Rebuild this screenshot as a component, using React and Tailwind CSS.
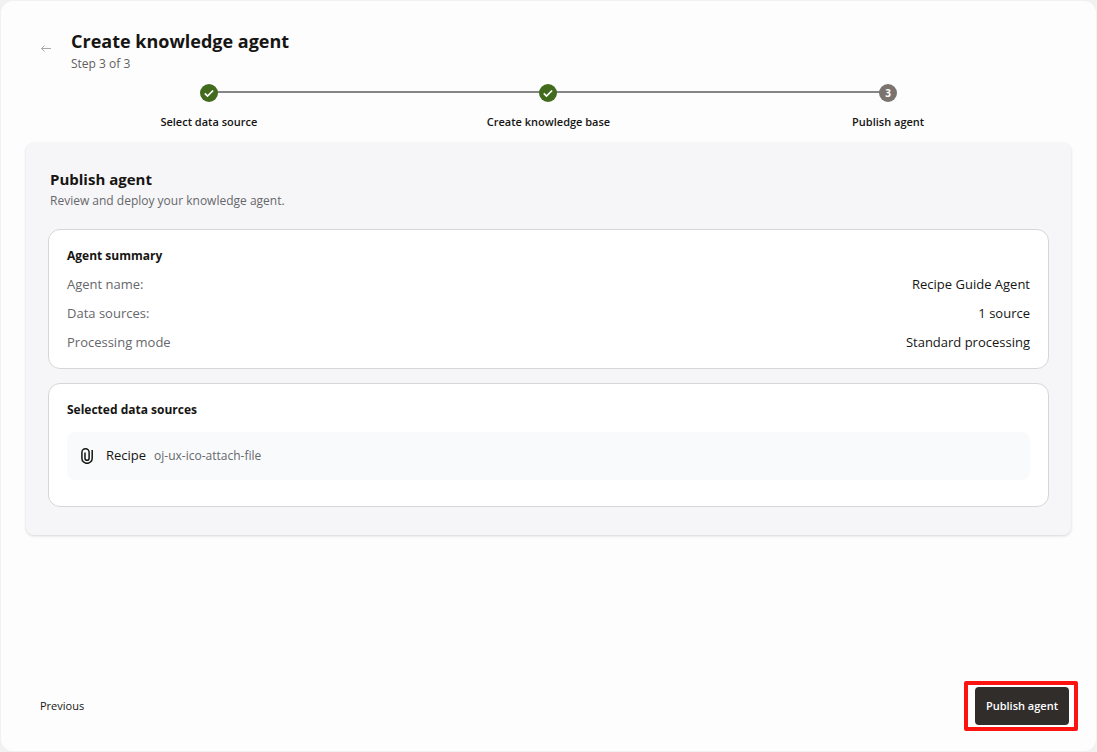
import React from "react";

const steps = [
  { label: "Select data source", done: true },
  { label: "Create knowledge base", done: true },
  { label: "Publish agent", done: false },
];

const summary = [
  { name: "Agent name:", value: "Recipe Guide Agent" },
  { name: "Data sources:", value: "1 source" },
  { name: "Processing mode", value: "Standard processing" },
];

function BackIcon() {
  return (
    <svg width="12" height="12" viewBox="0 0 12 12" fill="none" stroke="currentColor" aria-hidden="true">
      <path d="M11 6.5H1.5M4.5 3.5l-3 3 3 3" />
    </svg>
  );
}

function CheckIcon() {
  return (
    <svg width="18" height="18" viewBox="0 0 18 18" fill="none" stroke="currentColor" strokeWidth="1.7" aria-hidden="true">
      <path d="M4.8 9.4l2.7 2.7 5.6-5.6" />
    </svg>
  );
}

function AttachIcon() {
  return (
    <svg width="12" height="16" viewBox="0 0 12 16" fill="none" stroke="currentColor" strokeWidth="1.5" aria-hidden="true">
      <path d="M11.2 2v8.2a5.1 5.1 0 0 1-10.3 0V4.4a3.6 3.6 0 0 1 7.2 0v5.8a2.05 2.05 0 0 1-4.1 0V4.6" />
    </svg>
  );
}

function Step({ step, number, last }) {
  return (
    <li className="relative flex flex-col items-center">
      {!last && (
        <span className="absolute top-[7px] left-1/2 h-0.5 w-full bg-[#858585]" />
      )}
      <span
        className={
          step.done
            ? "relative flex size-[18px] items-center justify-center rounded-full bg-[#436b1d] text-white"
            : "relative flex size-[18px] items-center justify-center rounded-full bg-[#7a736e] text-[10px] font-bold text-white"
        }
      >
        {step.done ? <CheckIcon /> : number}
      </span>
      <span className="mt-3 text-[11px] leading-4 font-semibold">{step.label}</span>
    </li>
  );
}

function Card({ title, children }) {
  return (
    <section className="rounded-xl border border-[#d6d6d8] bg-white px-[18px] pt-4">
      <h3 className="text-xs leading-5 font-bold">{title}</h3>
      {children}
    </section>
  );
}

export default function App() {
  return (
    <div className="flex min-h-screen bg-[#f1f1f1] p-px font-['Open_Sans',sans-serif] text-[#161513]">
      <main className="flex flex-1 flex-col rounded-xl bg-[#fdfdfd] px-[25px] pt-7 pb-5">
        <header className="flex gap-[19px] pl-[14px]">
          <button type="button" aria-label="Back" className="mt-[13px] size-3 text-[#a8a8a8]">
            <BackIcon />
          </button>
          <div>
            <h1 className="text-lg leading-6 font-bold">Create knowledge agent</h1>
            <p className="mt-px text-xs leading-5 text-[#5f5f5f]">Step 3 of 3</p>
          </div>
        </header>

        <ol className="mx-[13px] mt-[10px] grid grid-cols-3">
          {steps.map((step, i) => (
            <Step key={step.label} step={step} number={i + 1} last={i === steps.length - 1} />
          ))}
        </ol>

        <div className="mt-[13px] rounded-lg bg-[#f6f6f8] px-6 pt-6 pb-7 shadow-[0_1px_3px_rgba(0,0,0,0.16)]">
          <h2 className="text-[15px] leading-6 font-bold">Publish agent</h2>
          <p className="text-xs leading-5 text-[#66676b]">Review and deploy your knowledge agent.</p>

          <div className="-mx-0.5 mt-[18px] grid gap-[14px]">
            <Card title="Agent summary">
              <dl className="grid gap-[9px] pt-2 pb-4">
                {summary.map((row) => (
                  <div key={row.name} className="flex justify-between text-[13px] leading-5">
                    <dt className="text-[#66676b]">{row.name}</dt>
                    <dd>{row.value}</dd>
                  </div>
                ))}
              </dl>
            </Card>

            <Card title="Selected data sources">
              <ul className="mt-3 mb-[26px]">
                <li className="flex h-12 items-center rounded-lg bg-[#f9fafb] px-[14px]">
                  <AttachIcon />
                  <span className="ml-[13px] text-[13px]">Recipe</span>
                  <span className="ml-2 text-xs text-[#66676b]">oj-ux-ico-attach-file</span>
                </li>
              </ul>
            </Card>
          </div>
        </div>

        <footer className="mt-auto flex items-center justify-between pl-[14px] text-[11px] leading-4 font-semibold">
          <button type="button" className="font-medium">Previous</button>
          <div className="-mr-[7px] rounded-xs border-4 border-[#fb1410] bg-white py-0.5 pr-[5px] pl-[7px]">
            <button type="button" className="h-[38px] rounded-sm bg-[#312d2a] px-[11px] text-white">
              Publish agent
            </button>
          </div>
        </footer>
      </main>
    </div>
  );
}
